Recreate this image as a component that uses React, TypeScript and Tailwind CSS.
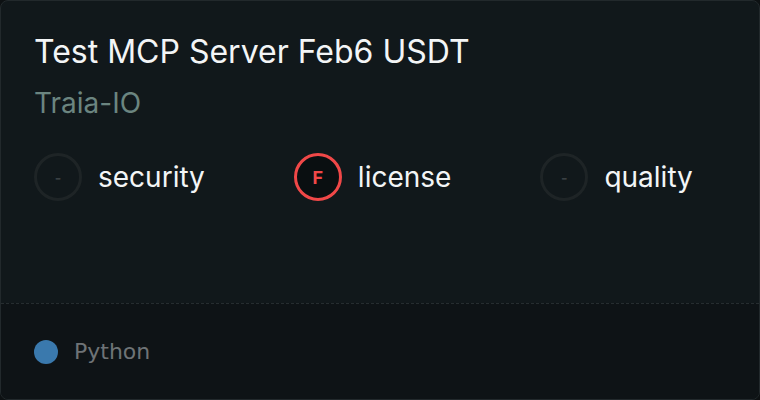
export default function App() {
  const scores = [
    { label: "security", grade: "-" },
    { label: "license", grade: "F" },
    { label: "quality", grade: "-" },
  ];

  return (
    <div className="h-[400px] w-[760px] bg-[#0d1113]" style={{ fontFamily: "Inter, sans-serif" }}>
      <div className="flex h-full w-full flex-col overflow-hidden rounded-lg border border-[#22292c] bg-[#11181b]">
        <div className="flex flex-1 flex-col px-[33px] pt-[31px]">
          <h1 className="text-[32px] leading-[40px] text-[#f3f5f6]">Test MCP Server Feb6 USDT</h1>
          <div className="mt-[14px] text-[28px] leading-[34px] text-[#6b8580]">Traia-IO</div>
          <div className="mt-[33px] flex items-center gap-[89px]">
            {scores.map((s) => (
              <div key={s.label} className="flex items-center gap-4">
                {s.grade === "F" ? (
                  <div className="flex h-12 w-12 items-center justify-center rounded-full border-[3px] border-[#f04848] bg-[#0a0f11] text-[18px] font-bold text-[#f04848]">
                    F
                  </div>
                ) : (
                  <div className="flex h-12 w-12 items-center justify-center rounded-full border-[3px] border-[#1e2426] text-[14px] font-bold text-[#3a4043]">
                    -
                  </div>
                )}
                <span className="text-[28px] text-[#f3f5f6]">{s.label}</span>
              </div>
            ))}
          </div>
        </div>
        <div className="flex h-[96px] items-center gap-4 border-t border-dashed border-[#262d30] bg-[#0e1316] px-[33px]">
          <span className="h-6 w-6 rounded-full bg-[#3a79ad]" />
          <span className="text-[22px] text-[#6e7376]" style={{ fontFamily: "'DejaVu Sans', sans-serif" }}>
            Python
          </span>
        </div>
      </div>
    </div>
  );
}
